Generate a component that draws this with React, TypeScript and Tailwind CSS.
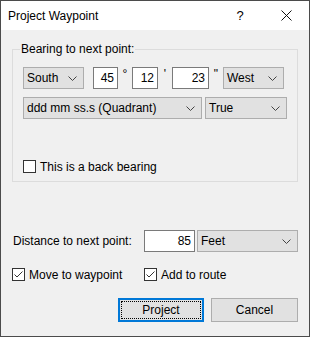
import React from "react";

const font = { fontFamily: '"Liberation Sans", Arial, sans-serif' };

function Chevron() {
  return (
    <svg width="9" height="5" viewBox="0 0 9 5" className="shrink-0">
      <polyline points="0.5,0.5 4.5,4.5 8.5,0.5" fill="none" stroke="#444" strokeWidth="1" />
    </svg>
  );
}

function Select({ value, w }: { value: string; w: string }) {
  return (
    <div
      className={`${w} h-[22px] shrink-0 bg-[#e1e1e1] border border-[#adadad] flex items-center justify-between pl-[3px] pr-[6px] text-[12px] text-black`}
    >
      <span>{value}</span>
      <Chevron />
    </div>
  );
}

function Field({ value, w, h = "h-[22px]" }: { value: string; w: string; h?: string }) {
  return (
    <div
      className={`${w} ${h} shrink-0 bg-white border border-[#7a7a7a] flex items-center justify-end pr-[3px] text-[12px] text-black`}
    >
      {value}
    </div>
  );
}

function Check({ checked, label }: { checked: boolean; label: string }) {
  return (
    <div className="flex items-center h-[13px]">
      <div className="w-[13px] h-[13px] border border-[#333] bg-white flex items-center justify-center shrink-0">
        {checked && (
          <svg width="11" height="11" viewBox="0 0 11 11">
            <polyline points="1.5,5.5 4,8 9.5,2.5" fill="none" stroke="#333" strokeWidth="1" />
          </svg>
        )}
      </div>
      <span className="ml-[4px] text-[12px] leading-[16px] text-black whitespace-nowrap">{label}</span>
    </div>
  );
}

export default function App() {
  return (
    <div
      style={font}
      className="w-[310px] h-[337px] border border-[#4b4b4b] bg-[#f0f0f0] flex flex-col text-black text-[12px]"
    >
      {/* Title bar */}
      <div className="h-[29px] bg-white flex items-center shrink-0">
        <span className="pl-[7px] flex-1 text-[12px]">Project Waypoint</span>
        <div className="w-[46px] h-full flex items-center justify-center text-[13px]">?</div>
        <div className="w-[46px] h-full flex items-center justify-center">
          <svg width="11" height="11" viewBox="0 0 11 11">
            <line x1="0.5" y1="0.5" x2="10.5" y2="10.5" stroke="#111" strokeWidth="1" />
            <line x1="10.5" y1="0.5" x2="0.5" y2="10.5" stroke="#111" strokeWidth="1" />
          </svg>
        </div>
      </div>

      {/* Bearing group */}
      <fieldset className="ml-[11px] mt-[11px] w-[286px] border border-[#dcdcdc] px-[10px] pb-[8px]">
        <legend className="ml-[-3px] px-[1px] leading-[16px] text-[12px]">Bearing to next point:</legend>
        <div className="mt-[10px] flex items-center">
          <Select value="South" w="w-[61px]" />
          <Field value="45" w="w-[25px] ml-[9px]" />
          <span className="w-[14px] text-center self-start leading-[14px]">°</span>
          <Field value="12" w="w-[26px]" />
          <span className="w-[14px] text-center self-start leading-[14px]">'</span>
          <Field value="23" w="w-[37px]" />
          <span className="w-[14px] text-center self-start leading-[14px]">"</span>
          <Select value="West" w="w-[61px]" />
        </div>
        <div className="mt-[8px] flex items-center">
          <Select value="ddd mm ss.s (Quadrant)" w="w-[179px]" />
          <div className="ml-[3px]">
            <Select value="True" w="w-[82px]" />
          </div>
        </div>
        <div className="mt-[41px]">
          <Check checked={false} label="This is a back bearing" />
        </div>
      </fieldset>

      {/* Distance */}
      <div className="mt-[48px] flex items-center pl-[12px]">
        <span className="w-[131px]">Distance to next point:</span>
        <Field value="85" w="w-[51px]" />
        <div className="ml-[2px]">
          <Select value="Feet" w="w-[101px]" />
        </div>
      </div>

      <div className="mt-[16px] flex items-center pl-[11px]">
        <div className="w-[132px]">
          <Check checked label="Move to waypoint" />
        </div>
        <Check checked label="Add to route" />
      </div>

      {/* Buttons */}
      <div className="mt-[17px] flex justify-end gap-[7px] pr-[11px]">
        <button className="w-[86px] h-[24px] bg-[#e1e1e1] border-2 border-[#0078d7] p-[1px] text-[12px]">
          <div className="w-full h-full border border-dotted border-black flex items-center justify-center">
            Project
          </div>
        </button>
        <button className="w-[87px] h-[24px] bg-[#e1e1e1] border border-[#adadad] flex items-center justify-center text-[12px]">
          Cancel
        </button>
      </div>
    </div>
  );
}
